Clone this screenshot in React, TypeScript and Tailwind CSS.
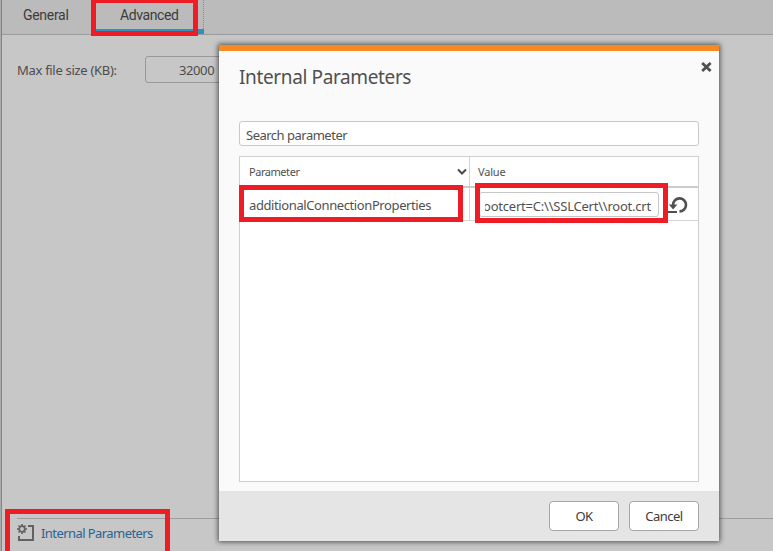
import React from "react";

function Mark({ className }: { className: string }) {
  return <div className={`pointer-events-none absolute border-[5px] border-[#ee1c24] ${className}`} />;
}

function Tabs() {
  return (
    <div className="flex h-[35px] shrink-0 border-b border-[#9b9b9b] bg-[#bbbbbb] font-['Roboto',sans-serif] text-[14px] leading-[31px] text-[#3c3c3c]">
      <div className="w-[89px] pl-[21px] tracking-[-0.3px]">General</div>
      <div className="w-[113px] border-b-[5px] border-b-[#2b93bd] pl-[29px] tracking-[-0.4px]">Advanced</div>
      <div className="h-[29px] w-0 -ml-px border-l border-dotted border-[#8c8c8c]" />
    </div>
  );
}

function GearFrameIcon() {
  return (
    <svg className="h-[18px] w-[18px] shrink-0" viewBox="0 0 18 18" fill="none" stroke="#626262">
      <path d="M11 2h5v14H2v-4" strokeWidth="2" />
      <circle cx="5" cy="5" r="2.8" strokeWidth="1.8" />
      <path d="M5 0v2M5 8v2M0 5h2M8 5h2M1.5 1.5l1.3 1.3M7.2 7.2l1.3 1.3M8.5 1.5L7.2 2.8M2.8 7.2L1.5 8.5" strokeWidth="1.6" />
    </svg>
  );
}

function ParameterTable() {
  return (
    <div className="mt-[10px] h-[326px] border border-[#cfcfcf] bg-white">
      <div className="flex h-[31px] border-b-2 border-[#cccccc] text-[11px] leading-[30px] tracking-[-0.45px]">
        <div className="flex w-[230px] items-center justify-between border-r border-[#d4d4d4] pl-[9px] pr-[2px]">
          <span>Parameter</span>
          <svg className="h-[8px] w-[10px]" viewBox="0 0 10 8" fill="none" stroke="#4a4a4a" strokeWidth="2">
            <path d="M1 1.5l4 4 4-4" />
          </svg>
        </div>
        <div className="pl-[8px] tracking-[-0.2px]">Value</div>
      </div>
      <div className="flex h-[33px] border-b border-[#d4d4d4]">
        <div className="w-[230px] border-r border-[#d4d4d4] pl-[9px] text-[13px] leading-[34px] tracking-[-0.4px]">
          additionalConnectionProperties
        </div>
        <div className="flex flex-1 items-start pl-[9px] pt-[4px]">
          <div className="flex h-[25px] w-[180px] rounded-[3px] border border-[#c6c6c6] pl-[5px] pr-[7px] text-[13px] leading-[26px]">
            <div className="flex w-full justify-end overflow-hidden whitespace-nowrap tracking-[-0.22px]">rootcert=C:\\SSLCert\\root.crt</div>
          </div>
          <svg className="ml-[9px] mt-[4px] h-[18px] w-[20px]" viewBox="0 0 20 18" fill="none" stroke="#505050">
            <path d="M5 9A6.5 6.5 0 1 1 11.5 15.4" strokeWidth="2.6" />
            <path d="M0.8 8.5h8.6l-4.3 5z" fill="#505050" stroke="none" />
            <path d="M0 16h9" strokeWidth="2" />
          </svg>
        </div>
      </div>
    </div>
  );
}

function Dialog() {
  return (
    <div className="absolute left-[219px] top-[45px] flex h-[496px] w-[500px] flex-col border-t-[6px] border-[#f68920] bg-[#fafafa] text-[#505050] shadow-[0_0_5px_1px_rgba(0,0,0,0.6)]">
      <div className="flex-1 px-[20px]">
        <div className="flex h-[70px] justify-between">
          <h1 className="mt-[11px] text-[19px] leading-[30px] tracking-[-0.37px]">Internal Parameters</h1>
          <svg className="-mr-[13px] mt-[11px] h-[10px] w-[11px]" viewBox="0 0 11 10" stroke="#505050" strokeWidth="2.8">
            <path d="M1.2 1l8.4 8M9.6 1l-8.4 8" />
          </svg>
        </div>
        <div className="h-[25px] rounded-[3px] border border-[#c8c8c8] bg-white pl-[6px] text-[13px] leading-[27px] tracking-[-0.5px]">Search parameter</div>
        <ParameterTable />
      </div>
      <div className="flex h-[50px] shrink-0 justify-end gap-[10px] bg-[#e5e5e5] pr-[20px] pt-[10px] text-[13px] tracking-[-0.5px] text-[#3c3c3c]">
        <button className="h-[30px] w-[70px] rounded-[4px] border border-[#a5a5a5] bg-white pt-px">OK</button>
        <button className="h-[30px] w-[70px] rounded-[4px] border border-[#a5a5a5] bg-white pt-px">Cancel</button>
      </div>
    </div>
  );
}

export default function App() {
  return (
    <div className="relative h-[551px] w-[773px] overflow-hidden border-l border-[#aaaaaa] bg-[#c7c7c7] font-['Noto_Sans',sans-serif] text-[#4d4d4d]">
      <div className="flex h-full flex-col border-l border-[#858585]">
        <Tabs />
        <div className="flex flex-1 items-start pl-[15px] pt-[21px] text-[13px]">
          <span className="w-[128px] leading-[29px] tracking-[-0.3px]">Max file size (KB):</span>
          <div className="h-[27px] w-[80px] rounded-[3px] border border-[#999999] pl-[33px] leading-[27px] tracking-[-0.4px]">32000</div>
        </div>
        <div className="ml-[15px] flex h-[33px] shrink-0 gap-[6px] border-t border-[#9e9e9e] pt-[5px] text-[13px] leading-[18px] tracking-[-0.57px] text-[#2b6294]">
          <GearFrameIcon />
          <span>Internal Parameters</span>
        </div>
      </div>
      <div className="absolute inset-0 -left-px">
        <Dialog />
        <Mark className="left-[91px] -top-[2px] h-[38px] w-[107px]" />
        <Mark className="left-[239px] top-[185px] h-[37px] w-[224px]" />
        <Mark className="left-[475px] top-[183px] h-[40px] w-[193px]" />
        <Mark className="left-[5px] top-[509px] h-[50px] w-[165px]" />
      </div>
    </div>
  );
}
